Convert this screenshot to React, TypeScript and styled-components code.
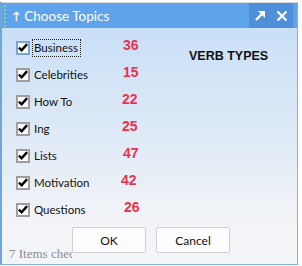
import React from 'react';
import styled, { createGlobalStyle } from 'styled-components';

const GlobalStyle = createGlobalStyle`
  html, body {
    margin: 0;
    padding: 0;
    background: #ffffff;
  }
`;

const topics: [string, number, number][] = [
  ['Business', 36, 1],
  ['Celebrities', 15, 1],
  ['How To', 22, 0],
  ['Ing', 25, 0],
  ['Lists', 47, 1],
  ['Motivation', 42, -1],
  ['Questions', 26, 2],
];

const Window = styled.div`
  width: 295px;
  height: 262px;
  margin-top: 2px;
  border: 1px solid #7fb6d8;
  border-top: none;
  border-left: 2px solid #6fa6dc;
  display: flex;
  flex-direction: column;
  font-family: Lato, 'Liberation Sans', sans-serif;
  background: linear-gradient(#c4ddf8 0%, #dbe8f6 45%, #f3f4f7 85%, #f4f5f7 100%);
`;

const TitleBar = styled.div`
  height: 25px;
  background: #5ea3ec;
  display: flex;
  align-items: center;
  color: #ffffff;
  border-top: 1px solid #d5dce4;
`;

const Grip = styled.div`
  width: 1px;
  height: 22px;
  margin-left: 2px;
  border-left: 2px dotted #8fd07a;
`;

const Pin = styled.span`
  font-size: 11px;
  font-weight: bold;
  margin-left: 5px;
  margin-right: 4px;
`;

const Title = styled.span`
  font-size: 13.5px;
  flex: 1;
`;

const Controls = styled.div`
  display: flex;
  align-items: center;
  height: 25px;
  width: 44px;
  margin-right: 4px;
  background: #4f8fd9;
  justify-content: space-around;
`;

const Body = styled.div`
  flex: 1;
  display: flex;
`;

const List = styled.div`
  display: flex;
  flex-direction: column;
  padding-top: 6px;
  padding-left: 14px;
`;

const Row = styled.div`
  display: grid;
  grid-template-columns: 13px 83px 30px;
  column-gap: 5px;
  align-items: center;
  height: 27px;
`;

const Box = styled.div<{ $focus?: boolean }>`
  width: 10px;
  height: 10px;
  border: 2px solid ${p => (p.$focus ? '#7aa3d6' : '#9e9e9e')};
  background: #ffffff;
  display: flex;
  align-items: center;
  justify-content: center;
`;

const Label = styled.span<{ $focus?: boolean }>`
  font-size: 11.5px;
  color: #111111;
  justify-self: start;
  padding: 1px 2px 2px 1px;
  margin-left: -2px;
  border: 1px dotted ${p => (p.$focus ? '#222222' : 'transparent')};
`;

const Count = styled.span<{ $shift: number }>`
  font-family: 'Liberation Sans', Arial, sans-serif;
  font-weight: bold;
  font-size: 14px;
  color: #e8334d;
  margin-top: -6px;
  margin-left: ${p => p.$shift}px;
`;

const Side = styled.div`
  padding-top: 21px;
  padding-left: 37px;
`;

const Heading = styled.div`
  font-family: 'Liberation Sans', Arial, sans-serif;
  font-weight: bold;
  font-size: 12.5px;
  color: #111111;
  white-space: nowrap;
`;

const Footer = styled.div`
  display: flex;
  align-items: flex-start;
  height: 37px;
  padding-left: 7px;
`;

const Status = styled.div`
  width: 63px;
  overflow: hidden;
  white-space: nowrap;
  font-family: 'Liberation Serif', serif;
  font-size: 13px;
  line-height: 15px;
  color: #8d8d8d;
  padding-top: 19px;
`;

const Button = styled.button`
  width: 74px;
  height: 26px;
  margin-right: 10px;
  background: #fdfdfd;
  border: 1px solid #cfd3d8;
  border-radius: 2px;
  font-family: Lato, 'Liberation Sans', sans-serif;
  font-size: 12px;
  color: #111111;
  padding: 0;
`;

const Check = () => (
  <svg width="11" height="11" viewBox="0 0 11 11">
    <path d="M1 5.6 L4 8.6 L10 1.8" fill="none" stroke="#000" strokeWidth="2.6" />
  </svg>
);

function App() {
  return (
    <Window>
      <GlobalStyle />
      <TitleBar>
        <Grip />
        <Pin>↑</Pin>
        <Title>Choose Topics</Title>
        <Controls>
          <svg width="13" height="13" viewBox="0 0 13 13">
            <path d="M2 11 L10 3" stroke="#fff" strokeWidth="2.4" />
            <path d="M4 2 L11 2 L11 9 Z" fill="#fff" />
          </svg>
          <svg width="12" height="12" viewBox="0 0 12 12">
            <path d="M1.5 1.5 L10.5 10.5 M10.5 1.5 L1.5 10.5" stroke="#fff" strokeWidth="2.2" />
          </svg>
        </Controls>
      </TitleBar>
      <Body>
        <List>
          {topics.map(([name, count, shift], i) => (
            <Row key={name}>
              <Box $focus={i === 0}>
                <Check />
              </Box>
              <Label $focus={i === 0}>{name}</Label>
              <Count $shift={shift}>{count}</Count>
            </Row>
          ))}
        </List>
        <Side>
          <Heading>VERB TYPES</Heading>
        </Side>
      </Body>
      <Footer>
        <Status>7 Items checked</Status>
        <Button>OK</Button>
        <Button>Cancel</Button>
      </Footer>
    </Window>
  );
}

export default App;
